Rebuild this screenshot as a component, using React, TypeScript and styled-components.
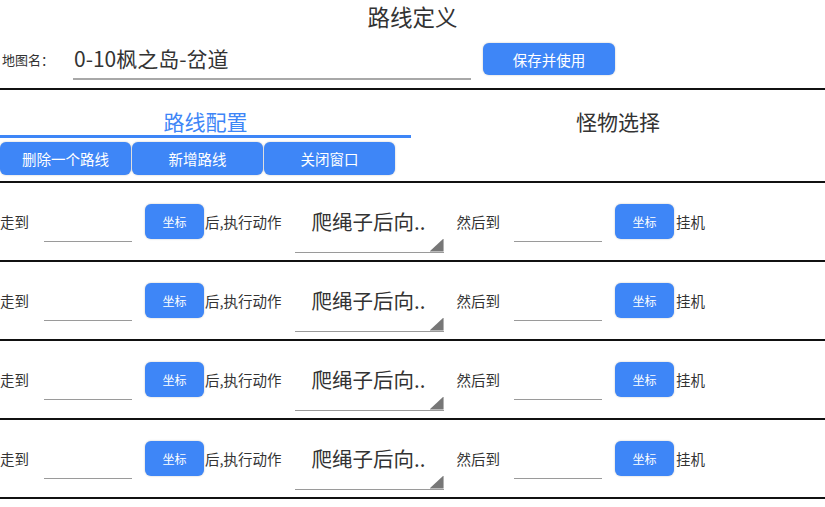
import styled, { createGlobalStyle } from 'styled-components'

const GlobalStyle = createGlobalStyle`
  html, body {
    margin: 0;
    padding: 0;
    background: #fff;
  }
  body {
    font-family: "Noto Sans CJK SC", "Noto Sans", sans-serif;
    color: #333;
  }
`;

const BLUE = '#3e86f7';

const Page = styled.div`
  width: 825px;
`;

const Header = styled.header`
  height: 30px;
  padding-top: 2px;
  box-sizing: border-box;
  display: flex;
  justify-content: center;
  align-items: center;
`;

const Title = styled.h1`
  margin: 0;
  font-size: 22.5px;
  font-weight: 400;
  line-height: 28px;
  color: #333;
`;

const MapRow = styled.div`
  height: 58px;
  display: flex;
  align-items: center;
  padding-left: 2px;
  border-bottom: 2px solid #111;
`;

const SmallLabel = styled.span`
  font-size: 13px;
  width: 71px;
  color: #333;
`;

const MapInput = styled.div`
  width: 397px;
  height: 40px;
  display: flex;
  align-items: center;
  padding-left: 1px;
  font-size: 21px;
  color: #333;
  border-bottom: 2px solid #a8a8a8;
`;

const BlueButton = styled.button<{ $w: number; $h: number; $fs?: number }>`
  width: ${p => p.$w}px;
  height: ${p => p.$h}px;
  border: none;
  border-radius: 6px;
  background: ${BLUE};
  color: #fff;
  font-family: inherit;
  font-size: ${p => p.$fs ?? 14.5}px;
  padding: 0;
  flex-shrink: 0;
  box-shadow: 0 0 2px rgba(0, 0, 0, 0.25);
  cursor: pointer;
`;

const SaveWrap = styled.div`
  margin-left: 12px;
  display: flex;
`;

const Tabs = styled.div`
  display: flex;
`;

const Tab = styled.div<{ $active?: boolean }>`
  width: ${p => (p.$active ? 411 : 414)}px;
  padding-top: 17px;
  line-height: 28px;
  font-size: 21px;
  text-align: center;
  color: ${p => (p.$active ? BLUE : '#333')};
  border-bottom: 3px solid ${p => (p.$active ? BLUE : 'transparent')};
`;

const ToolBar = styled.div`
  display: flex;
  gap: 1px;
  padding-top: 4px;
  padding-bottom: 6px;
  border-bottom: 2px solid #111;
`;

const RouteRow = styled.div`
  height: 77px;
  display: flex;
  align-items: center;
  border-bottom: 2px solid #111;
`;

const Label = styled.span<{ $ml?: number }>`
  font-size: 14.5px;
  color: #333;
  white-space: nowrap;
  margin-left: ${p => p.$ml ?? 0}px;
`;

const PosInput = styled.div<{ $ml: number }>`
  width: 88px;
  height: 40px;
  margin-left: ${p => p.$ml}px;
  margin-right: 13px;
  align-self: flex-start;
  margin-top: 18px;
  border-bottom: 1.5px solid #9a9a9a;
`;

const Select = styled.div`
  position: relative;
  width: 149px;
  height: 62px;
  margin-left: 13px;
  display: flex;
  align-items: center;
  padding-left: 17px;
  box-sizing: border-box;
  font-size: 20.5px;
  color: #333;
  border-bottom: 1.5px solid #9a9a9a;
`;

const Corner = styled.span`
  position: absolute;
  right: 0;
  bottom: 0;
  width: 14px;
  height: 13px;
  background: #777;
  clip-path: polygon(100% 0, 100% 100%, 0 100%);
`;

const RouteLine = () => (
  <RouteRow>
    <Label>走到</Label>
    <PosInput $ml={15} />
    <BlueButton $w={59} $h={35} $fs={12}>坐标</BlueButton>
    <Label $ml={1}>后,执行动作</Label>
    <Select>
      爬绳子后向..
      <Corner />
    </Select>
    <Label $ml={13}>然后到</Label>
    <PosInput $ml={14} />
    <BlueButton $w={59} $h={35} $fs={12}>坐标</BlueButton>
    <Label $ml={2}>挂机</Label>
  </RouteRow>
);

export default function App() {
  return (
    <Page>
      <GlobalStyle />
      <Header>
        <Title>路线定义</Title>
      </Header>
      <MapRow>
        <SmallLabel>地图名：</SmallLabel>
        <MapInput>0-10枫之岛-岔道</MapInput>
        <SaveWrap>
          <BlueButton $w={132} $h={32} $fs={14.5}>保存并使用</BlueButton>
        </SaveWrap>
      </MapRow>
      <Tabs>
        <Tab $active>路线配置</Tab>
        <Tab>怪物选择</Tab>
      </Tabs>
      <ToolBar>
        <BlueButton $w={131} $h={33}>删除一个路线</BlueButton>
        <BlueButton $w={131} $h={33}>新增路线</BlueButton>
        <BlueButton $w={131} $h={33}>关闭窗口</BlueButton>
      </ToolBar>
      {[0, 1, 2, 3].map(i => (
        <RouteLine key={i} />
      ))}
    </Page>
  )
}
